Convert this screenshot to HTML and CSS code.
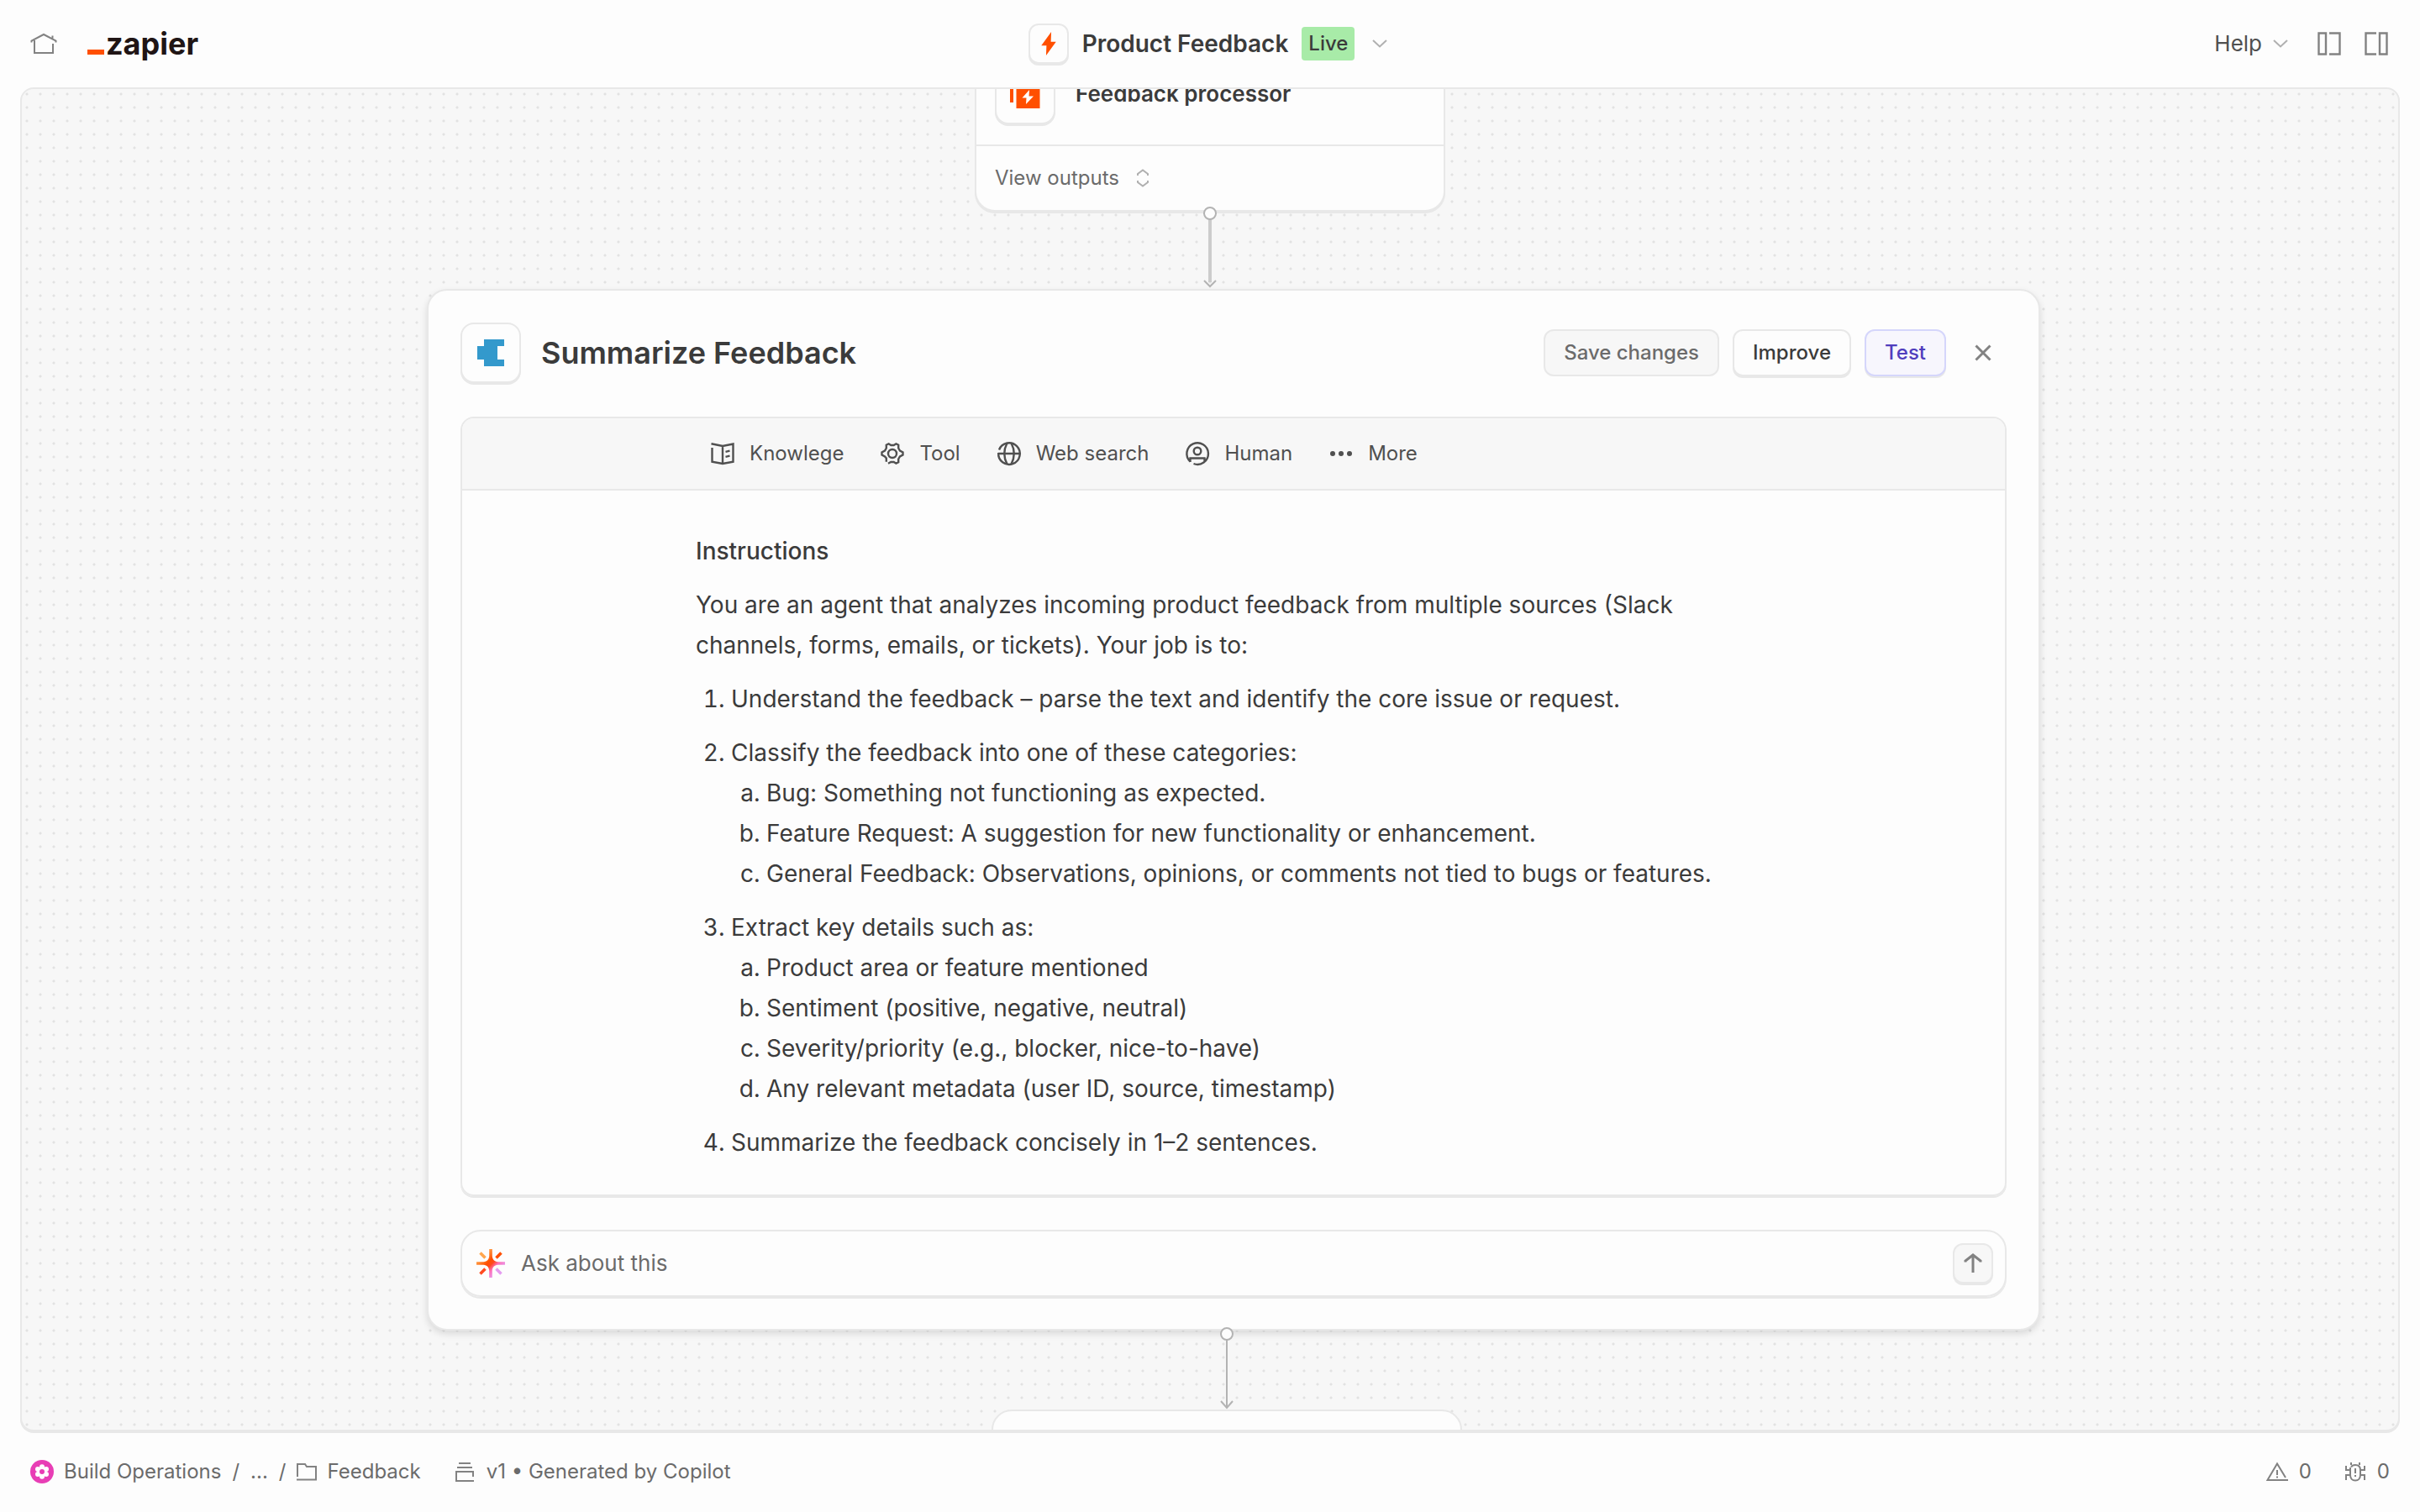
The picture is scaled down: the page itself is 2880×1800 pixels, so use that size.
FILE: index.html
```html
<!DOCTYPE html>
<html lang="en">
<head>
<meta charset="utf-8">
<meta name="viewport" content="width=device-width, initial-scale=1">
<title>Product Feedback</title>
<link rel="stylesheet" href="styles.css">
</head>
<body>
<header class="topbar">
  <nav class="topbar-side" aria-label="Main">
    <a class="icon-link" href="#" aria-label="Home">
      <svg class="icon" viewBox="0 0 32 32" fill="none" stroke="currentColor" stroke-width="2"><path d="M1.500 14.500v-2L16 5l14.500 7.500v2M26.500 9.500v-3M5 12v15h22V16"/></svg>
    </a>
    <a class="logo" href="#"><span class="logo-bar"></span>zapier</a>
  </nav>
  <button class="zap-title" type="button">
    <span class="tile tile-small">
      <svg class="icon" viewBox="0 0 32 32"><path fill="#ff4f00" d="M19.500 0 6 18.500h7L12.500 32 26 13.500h-7z"/></svg>
    </span>
    <span class="zap-name">Product Feedback</span>
    <span class="badge">Live</span>
    <svg class="chevron" viewBox="0 0 20 12" fill="none" stroke="currentColor" stroke-width="2"><path d="m2 2 8 7.500L18 2"/></svg>
  </button>
  <div class="topbar-side topbar-end">
    <button class="help" type="button">Help
      <svg class="chevron" viewBox="0 0 20 12" fill="none" stroke="currentColor" stroke-width="2"><path d="m2 2 8 7.500L18 2"/></svg>
    </button>
    <button class="icon-link" type="button" aria-label="Toggle left panel">
      <svg class="icon" viewBox="0 0 32 32" fill="none" stroke="currentColor" stroke-width="2.400"><path d="M3.500 3.500h8.500v25H3.500zM16 3.500h12.500v25H16"/></svg>
    </button>
    <button class="icon-link" type="button" aria-label="Toggle right panel">
      <svg class="icon" viewBox="0 0 32 32" fill="none" stroke="currentColor" stroke-width="2.400"><path d="M20 3.500h8.500v25H20zM16 3.500H3.500v25H16"/></svg>
    </button>
  </div>
</header>

<main class="canvas">
  <section class="node node-first">
    <div class="node-head">
      <span class="tile">
        <svg class="icon" viewBox="0 0 32 32"><path fill="#ff4f00" d="M-2 2h4v24h-4zM5.500 5h28v28h-28z"/><path fill="#fff" d="m21 11-8.500 9.500h5L17 28l9-9.500h-5.500z"/></svg>
      </span>
      <h2 class="node-name">Feedback processor</h2>
    </div>
    <button class="node-foot" type="button">View outputs
      <svg class="sorter" viewBox="0 0 16 24" fill="none" stroke="currentColor" stroke-width="2"><path d="M2 9V7l6-4.500L14 7v2M2 15v2l6 4.500 6-4.500v-2"/></svg>
    </button>
  </section>

  <section class="panel">
    <header class="panel-head">
      <span class="tile">
        <svg class="icon" viewBox="0 0 32 32"><path fill="#3399cc" d="M8 0h24v8h-8v16h8v8H8v-8H0V8h8z"/></svg>
      </span>
      <h1 class="panel-title">Summarize Feedback</h1>
      <div class="actions">
        <button class="btn btn-muted" type="button">Save changes</button>
        <button class="btn" type="button">Improve</button>
        <button class="btn btn-accent" type="button">Test</button>
        <button class="close" type="button" aria-label="Close">
          <svg class="icon" viewBox="0 0 32 32" fill="none" stroke="currentColor" stroke-width="3"><path d="m7.500 7.500 17 17m0-17-17 17"/></svg>
        </button>
      </div>
    </header>

    <div class="editor">
      <div class="toolbar">
        <div class="tools">
          <button class="tool" type="button">
            <svg class="icon" viewBox="0 0 32 32" fill="none" stroke="currentColor" stroke-width="2.400"><path d="M2.500 4.300 16 7l12.500-2.500V25.700L16 28 3.500 25.700V9M16 7v21M19.500 13.800l5-1.200M19.500 19.800l5-1.200"/></svg>
            Knowlege</button>
          <button class="tool" type="button">
            <svg class="icon" viewBox="0 0 32 32" fill="none" stroke="currentColor" stroke-width="2.400"><circle cx="16" cy="16" r="5"/><path d="M8.800 25.800V21.500L7 19.500 3.500 17.500v-3L7 12.500l1.800-3V5.800l2.800-1.500L14.300 6h3.400l2.700-1.700 2.800 1.500v3.700l1.800 3 3.500 2v3l-3.500 2-1.800 3v3.700l-2.800 1.500-2.700-1.700h-3.400L11 27.700"/></svg>
            Tool</button>
          <button class="tool" type="button">
            <svg class="icon" viewBox="0 0 32 32" fill="none" stroke="currentColor" stroke-width="2.400"><path d="M4 11.500A12.800 12.800 0 1 1 3.200 15"/><path d="M3 16h26M13.500 3.500q-6.500 12.500 0 25M18.500 3.500q6.500 12.500 0 25"/></svg>
            Web search</button>
          <button class="tool" type="button">
            <svg class="icon" viewBox="0 0 32 32" fill="none" stroke="currentColor" stroke-width="2.400"><path d="M7.500 26V21.500h17V25M11.500 28a12.800 12.800 0 1 0-4-2.500"/><circle cx="16" cy="13" r="4.300"/></svg>
            Human</button>
          <button class="tool" type="button">
            <svg class="icon" viewBox="0 0 32 32" fill="currentColor"><circle cx="6" cy="16" r="3"/><circle cx="16" cy="16" r="3"/><circle cx="26" cy="16" r="3"/></svg>
            More</button>
        </div>
      </div>
      <article class="prose">
        <h3>Instructions</h3>
        <p>You are an agent that analyzes incoming product feedback from multiple sources (Slack channels, forms, emails, or tickets). Your job is to:</p>
        <ol class="steps">
          <li>Understand the feedback – parse the text and identify the core issue or request.</li>
          <li>Classify the feedback into one of these categories:
            <ol class="substeps">
              <li>Bug: Something not functioning as expected.</li>
              <li>Feature Request: A suggestion for new functionality or enhancement.</li>
              <li>General Feedback: Observations, opinions, or comments not tied to bugs or features.</li>
            </ol>
          </li>
          <li>Extract key details such as:
            <ol class="substeps">
              <li>Product area or feature mentioned</li>
              <li>Sentiment (positive, negative, neutral)</li>
              <li>Severity/priority (e.g., blocker, nice-to-have)</li>
              <li>Any relevant metadata (user ID, source, timestamp)</li>
            </ol>
          </li>
          <li>Summarize the feedback concisely in 1–2 sentences.</li>
        </ol>
      </article>
    </div>

    <form class="ask">
      <svg class="spark" viewBox="0 0 36 36">
        <defs><linearGradient id="warm" gradientUnits="userSpaceOnUse" x1="8" y1="8" x2="28" y2="28"><stop offset="0" stop-color="#ffa64d"/><stop offset=".4" stop-color="#ff4f00"/><stop offset=".55" stop-color="#ff4a20"/><stop offset=".72" stop-color="#ff70b8"/><stop offset="1" stop-color="#e49cf0"/></linearGradient></defs>
        <path fill="url(#warm)" d="M16.200 1h3.600v8.500c.5 4.200 2.500 6.200 6.700 6.700H35v3.600h-8.500c-4.200.5-6.200 2.500-6.700 6.700V35h-3.600v-8.500c-.5-4.200-2.500-6.200-6.700-6.700H1v-3.600h8.500c4.200-.5 6.200-2.500 6.700-6.700z"/>
        <g fill="none" stroke-width="3.600"><path stroke="#ffa64d" d="m5.500 5.500 6 6"/><path stroke="#ff4f00" d="m30.500 5.500-6 6"/><path stroke="#ff4a20" d="m11.500 24.500-6 6"/><path stroke="#e49cf0" d="m24.500 24.500 6 6"/></g>
      </svg>
      <input class="ask-input" type="text" aria-label="Ask about this" placeholder="Ask about this">
      <button class="send" type="submit" aria-label="Send">
        <svg class="icon" viewBox="0 0 32 32" fill="none" stroke="currentColor" stroke-width="3"><path d="M16 27V7M7 14.500V13l9-7 9 7v1.500"/></svg>
      </button>
    </form>
  </section>

  <section class="node node-last" aria-label="Next step"></section>

  <svg class="link link-top" viewBox="0 0 20 100" fill="none"><path stroke="#cccccc" stroke-width="4" d="M10 16v76"/><circle cx="10" cy="10" r="7" fill="#fdfdfd" stroke="#b3b3b3" stroke-width="2"/><path stroke="#b3b3b3" stroke-width="2" d="m3 90 7 7 7-7"/></svg>
  <svg class="link link-bottom" viewBox="0 0 20 100" fill="none"><path stroke="#b3b3b3" stroke-width="2" d="M10 16v82m-7-8 7 8 7-8"/><circle cx="10" cy="10" r="7" fill="#fdfdfd" stroke="#b3b3b3" stroke-width="2"/></svg>
</main>

<footer class="statusbar">
  <nav class="crumbs" aria-label="Breadcrumb">
    <a class="crumb" href="#">
      <svg class="flower" viewBox="0 0 28 28"><circle cx="14" cy="14" r="14" fill="#e83eb5"/><g fill="#fff"><circle cx="14" cy="8.200" r="3"/><circle cx="19" cy="11" r="3"/><circle cx="19" cy="17" r="3"/><circle cx="14" cy="19.800" r="3"/><circle cx="9" cy="17" r="3"/><circle cx="9" cy="11" r="3"/><circle cx="14" cy="14" r="5.500"/></g><circle cx="14" cy="14" r="3" fill="#e83eb5"/></svg>
      Build Operations</a>
    <span>/</span>
    <a class="crumb" href="#">...</a>
    <span>/</span>
    <a class="crumb" href="#">
      <svg class="small-icon" viewBox="0 0 24 24" fill="none" stroke="currentColor" stroke-width="2"><path d="M1 18V3h9l2 3h11v15.500H0"/></svg>
      Feedback</a>
  </nav>
  <span class="version">
    <svg class="small-icon" viewBox="0 0 24 24" fill="none" stroke="currentColor" stroke-width="2"><path d="M5 2h14M3 7h18M22 18v-6H2v11h21"/></svg>
    v1 • Generated by Copilot</span>
  <div class="counts">
    <span class="count">
      <svg class="count-icon" viewBox="0 0 28 24" fill="none" stroke="currentColor" stroke-width="2"><path d="M27 22H2.500L14 2.500 24 19M14 10v6m0 1.500v2"/></svg>
      0</span>
    <span class="count">
      <svg class="count-icon" viewBox="0 0 28 24" fill="none" stroke="currentColor" stroke-width="2"><path d="M9 6.500C10 4.500 12 4 14 4c4 0 6 2.500 6 6v6c0 4-2.500 6.500-6 6.500S8 20 8 16V7M9 4V1m10 3V1M8 10H3V5m5 11H3v6m17-12h5V5m-5 11h5v6M14 8v6m0 2v2"/></svg>
      0</span>
  </div>
</footer>
</body>
</html>
```
FILE: styles.css
```css
:root {
  --surface: #fdfdfd;
  --subtle: #f7f7f7;
  --line: #e8e8e8;
  --text: #3b3b3b;
  --text-mid: #505050;
  --text-soft: #6b6b6b;
  --icon: #828282;
  --icon-light: #b0b0b0;
}

* {
  box-sizing: border-box;
}

body {
  margin: 0;
  height: 100vh;
  display: flex;
  flex-direction: column;
  background: var(--surface);
  color: var(--text);
  font-family: Inter, "Liberation Sans", sans-serif;
  font-size: 24px;
  line-height: 32px;
}

h1,
h2,
h3,
p,
ol {
  margin: 0;
}

a {
  color: inherit;
  text-decoration: none;
}

button {
  margin: 0;
  padding: 0;
  border: 0;
  background: none;
  color: inherit;
  font: inherit;
  white-space: nowrap;
  cursor: pointer;
}

svg {
  display: block;
  flex: none;
  overflow: visible;
}

.icon {
  width: 32px;
  height: 32px;
}

/* Top bar */

.topbar {
  flex: none;
  height: 104px;
  padding: 0 36px;
  display: flex;
  align-items: center;
}

.topbar-side {
  flex: 1;
  display: flex;
  align-items: center;
  gap: 36px;
}

.topbar-end {
  justify-content: flex-end;
  gap: 24px;
}

.icon-link {
  color: var(--icon);
}

.logo {
  display: flex;
  align-items: baseline;
  gap: 2px;
  color: #201515;
  font-size: 36px;
  font-weight: 700;
  line-height: 48px;
}

.logo-bar {
  width: 20px;
  height: 6px;
  background: #ff4f00;
}

.tile {
  flex: none;
  width: 72px;
  height: 72px;
  display: flex;
  align-items: center;
  justify-content: center;
  border: 2px solid var(--line);
  border-radius: 16px;
  background: var(--surface);
  box-shadow: 0 2px 0 var(--line);
}

.tile-small {
  width: 48px;
  height: 48px;
  border-radius: 12px;
}

.tile-small .icon {
  width: 28px;
  height: 32px;
}

.zap-title {
  display: flex;
  align-items: center;
  gap: 16px;
  padding-right: 4px;
}

.zap-name {
  font-size: 28px;
  font-weight: 600;
}

.badge {
  padding: 4px 8px;
  border-radius: 4px;
  background: #a8eba8;
  font-weight: 500;
}

.chevron {
  width: 20px;
  height: 12px;
  color: var(--icon-light);
}

.zap-title .chevron {
  margin-left: 4px;
}

.help {
  display: flex;
  align-items: center;
  gap: 12px;
  margin-right: 8px;
  color: var(--text-mid);
  font-size: 26px;
}

/* Canvas */

.canvas {
  position: relative;
  flex: 1;
  min-height: 0;
  margin: 0 24px 2px;
  overflow: hidden;
  border: 2px solid var(--line);
  border-radius: 16px;
  background: radial-gradient(circle, #e2e2e2 1px, transparent 2px) -2px -2px / 16px 16px var(--subtle);
  box-shadow: 0 2px 0 var(--line);
}

.node {
  position: absolute;
  width: 560px;
  border: 2px solid var(--line);
  border-radius: 24px;
  background: var(--surface);
  box-shadow: 0 2px 0 var(--line);
}

.node-first {
  top: -56px;
  left: calc(50% - 280px);
}

.node-head {
  display: flex;
  align-items: center;
  gap: 24px;
  padding: 24px 22px;
  border-bottom: 2px solid var(--line);
}

.node-name {
  font-size: 26px;
  font-weight: 600;
  line-height: 32px;
}

.node-foot {
  width: 100%;
  height: 76px;
  padding: 0 22px;
  display: flex;
  align-items: center;
  gap: 20px;
  color: var(--text-soft);
}

.sorter {
  width: 16px;
  height: 24px;
  color: var(--icon-light);
}

.node-last {
  top: 1572px;
  left: calc(50% - 260px);
  height: 200px;
}

.link {
  position: absolute;
  width: 20px;
  height: 100px;
}

.link-top {
  top: 138px;
  left: calc(50% - 10px);
}

.link-bottom {
  top: 1472px;
  left: calc(50% + 10px);
}

/* Expanded step */

.panel {
  position: absolute;
  top: 238px;
  left: calc(50% - 932px);
  width: 1920px;
  max-width: 100%;
  display: flex;
  flex-direction: column;
  gap: 40px;
  padding: 38px;
  border: 2px solid var(--line);
  border-radius: 24px;
  background: var(--surface);
  box-shadow: 0 4px 8px rgba(0, 0, 0, 0.12);
}

.panel-head {
  display: flex;
  align-items: center;
  gap: 24px;
}

.panel-title {
  flex: 1;
  font-size: 36px;
  font-weight: 600;
  line-height: 48px;
}

.actions {
  display: flex;
  align-items: center;
  gap: 16px;
  padding-right: 12px;
}

.btn {
  height: 56px;
  padding: 0 22px;
  border: 2px solid var(--line);
  border-radius: 12px;
  background: var(--surface);
  box-shadow: 0 2px 0 var(--line);
  font-weight: 500;
}

.btn-muted {
  background: var(--subtle);
  box-shadow: none;
  color: var(--text-soft);
}

.btn-accent {
  border-color: #d5d6fb;
  background: #f7f6fd;
  color: #503ebd;
}

.close {
  margin-left: 12px;
  color: var(--icon);
}

.editor {
  overflow: hidden;
  border: 2px solid var(--line);
  border-radius: 16px;
  box-shadow: 0 2px 0 var(--line);
}

.toolbar {
  border-bottom: 2px solid var(--line);
  background: var(--subtle);
}

.tools {
  max-width: 1280px;
  margin: 0 auto;
  padding: 0 16px;
  display: flex;
  gap: 42px;
}

.tool {
  height: 84px;
  display: flex;
  align-items: center;
  gap: 16px;
  color: var(--text-mid);
}

.prose {
  max-width: 1280px;
  margin: 0 auto;
  padding: 48px 0 38px;
  display: flex;
  flex-direction: column;
  gap: 16px;
  font-size: 28px;
  line-height: 48px;
}

.prose h3 {
  font-size: 28px;
  font-weight: 500;
}

.steps {
  display: flex;
  flex-direction: column;
  gap: 16px;
  padding-left: 42px;
}

.substeps {
  padding-left: 42px;
  list-style: lower-alpha;
}

/* Prompt */

.ask {
  height: 80px;
  padding: 0 14px 0 16px;
  display: flex;
  align-items: center;
  gap: 18px;
  border: 2px solid var(--line);
  border-radius: 24px;
  box-shadow: 0 2px 0 var(--line);
}

.spark {
  width: 36px;
  height: 36px;
}

.ask-input {
  flex: 1;
  min-width: 0;
  padding: 0;
  border: 0;
  outline: 0;
  background: none;
  color: var(--text);
  font: inherit;
  font-size: 26px;
}

.ask-input::placeholder {
  color: var(--text-soft);
  opacity: 1;
}

.send {
  width: 48px;
  height: 48px;
  display: flex;
  align-items: center;
  justify-content: center;
  border: 2px solid var(--line);
  border-radius: 12px;
  background: var(--subtle);
  box-shadow: 0 2px 0 var(--line);
  color: var(--icon);
}

/* Status bar */

.statusbar {
  flex: none;
  height: 94px;
  padding: 0 36px 2px;
  display: flex;
  align-items: center;
  gap: 40px;
  color: var(--text-soft);
}

.crumbs {
  display: flex;
  align-items: center;
  gap: 13px;
}

.crumb {
  display: flex;
  align-items: center;
  gap: 12px;
}

.version {
  display: flex;
  align-items: center;
  gap: 14px;
}

.count {
  display: flex;
  align-items: center;
  gap: 12px;
}

.flower {
  width: 28px;
  height: 28px;
}

.small-icon {
  width: 24px;
  height: 24px;
  color: var(--icon);
}

.counts {
  margin-left: auto;
  display: flex;
  gap: 38px;
}

.count-icon {
  width: 28px;
  height: 24px;
  color: var(--icon);
}
```
